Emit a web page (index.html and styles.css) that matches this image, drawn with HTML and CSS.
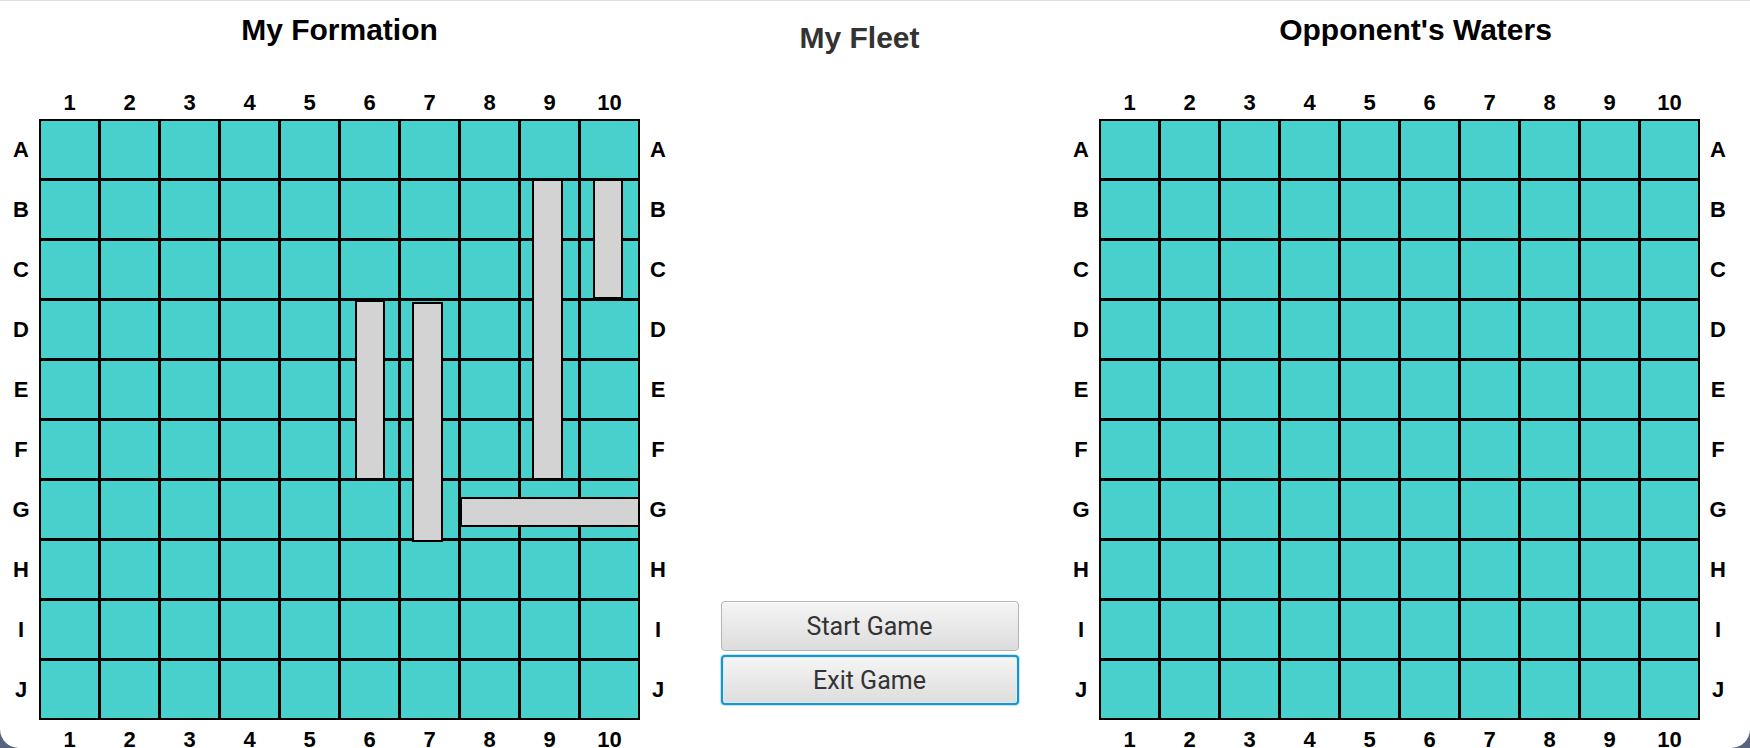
FILE: index.html
```html
<!DOCTYPE html>
<html lang="en">
<head>
  <meta charset="UTF-8">
  <title>Battleship</title>
  <link rel="stylesheet" href="styles.css">
</head>
<body>

  <div class="window">
    <section class="board" id="myBoard">
      <h2 class="board-title">My Formation</h2>
      <div class="col-nums top"></div>
      <div class="row-labels left"></div>
      <div class="grid"></div>
      <div class="row-labels right"></div>
      <div class="col-nums bottom"></div>
    </section>

    <div class="fleet">
      <h2 class="fleet-title">My Fleet</h2>
      <div class="actions">
        <button type="button" class="btn">Start Game</button>
        <button type="button" class="btn focused">Exit Game</button>
      </div>
    </div>

    <section class="board" id="enemyBoard">
      <h2 class="board-title shifted">Opponent's Waters</h2>
      <div class="col-nums top"></div>
      <div class="row-labels left"></div>
      <div class="grid"></div>
      <div class="row-labels right"></div>
      <div class="col-nums bottom"></div>
    </section>
  </div>

  <script>
    const rows = "ABCDEFGHIJ";

    // ships placed on my board (pixels inside the grid)
    const ships = [
      { left: 493, top: 60, width: 31, height: 301 },
      { left: 554, top: 60, width: 30, height: 120 },
      { left: 316, top: 181, width: 30, height: 180 },
      { left: 373, top: 183, width: 31, height: 240 },
      { left: 421, top: 378, width: 180, height: 30 }
    ];

    function buildBoard(board) {
      board.querySelectorAll(".col-nums").forEach(function (el) {
        for (let i = 1; i <= 10; i++) {
          const span = document.createElement("span");
          span.textContent = i;
          el.appendChild(span);
        }
      });
      board.querySelectorAll(".row-labels").forEach(function (el) {
        for (const r of rows) {
          const span = document.createElement("span");
          span.textContent = r;
          el.appendChild(span);
        }
      });
      const grid = board.querySelector(".grid");
      for (let i = 0; i < 100; i++) {
        const cell = document.createElement("div");
        cell.className = "cell";
        grid.appendChild(cell);
      }
      return grid;
    }

    const myGrid = buildBoard(document.getElementById("myBoard"));
    buildBoard(document.getElementById("enemyBoard"));

    ships.forEach(function (s) {
      const ship = document.createElement("div");
      ship.className = "ship";
      ship.style.left = s.left + "px";
      ship.style.top = s.top + "px";
      ship.style.width = s.width + "px";
      ship.style.height = s.height + "px";
      myGrid.appendChild(ship);
    });
  </script>

</body>
</html>
```

FILE: styles.css
```css
body {
  margin: 0;
  background-color: #58637d;
  font-family: "Liberation Sans", Arial, sans-serif;
  overflow: hidden;
}

.window {
  display: flex;
  height: 748px;
  padding: 0 14px 0 3px;
  box-sizing: border-box;
  background-color: #fff;
  border-top: 1px solid #dedede;
  border-radius: 0 0 19px 19px;
}

.board {
  display: grid;
  grid-template-columns: 36px 601px 36px;
  grid-template-rows: 90px 28px 601px auto;
}

.board-title {
  grid-column: 2;
  grid-row: 1;
  margin: 0;
  padding-top: 12px;
  font-size: 30px;
  line-height: 34px;
  font-weight: bold;
  color: #000;
  text-align: center;
}

.board-title.shifted {
  padding-left: 32px;
}

.col-nums {
  grid-column: 2;
  display: grid;
  grid-template-columns: repeat(10, 57px);
  column-gap: 3px;
  padding: 0 2px;
  font-size: 22px;
  font-weight: bold;
  line-height: 24px;
  text-align: center;
}

.col-nums.top {
  grid-row: 2;
}

.col-nums.bottom {
  grid-row: 4;
  margin-top: 8px;
}

.row-labels {
  grid-row: 3;
  display: grid;
  grid-template-rows: repeat(10, 57px);
  row-gap: 3px;
  padding: 2px 0;
  align-items: center;
  text-align: center;
  font-size: 22px;
  font-weight: bold;
}

.row-labels.left {
  grid-column: 1;
}

.row-labels.right {
  grid-column: 3;
}

.grid {
  grid-column: 2;
  grid-row: 3;
  position: relative;
  display: grid;
  grid-template-columns: repeat(10, 57px);
  grid-template-rows: repeat(10, 57px);
  gap: 3px;
  padding: 2px;
  background-color: #000;
}

.cell {
  background-color: #48d1cc;
}

.ship {
  position: absolute;
  box-sizing: border-box;
  background-color: #d3d3d3;
  border: 2px solid #000;
}

.fleet {
  flex: 1;
  display: flex;
  flex-direction: column;
  align-items: center;
}

.fleet-title {
  margin: 0 20px 0 0;
  padding-top: 20px;
  font-size: 30px;
  line-height: 34px;
  font-weight: bold;
  color: #333;
}

.actions {
  margin-top: auto;
  margin-bottom: 43px;
  display: flex;
  flex-direction: column;
  gap: 4px;
}

.btn {
  width: 298px;
  height: 50px;
  box-sizing: border-box;
  border: 1px solid #b4b4b4;
  border-radius: 4px;
  background: linear-gradient(#f5f5f5, #dddddd);
  box-shadow: inset 0 1px 0 #fff;
  font-family: Roboto, sans-serif;
  font-size: 25px;
  color: #333;
  cursor: pointer;
}

.btn.focused {
  border: 2px solid #0f98d4;
  box-shadow: 0 0 0 1px #c4e6f6, inset 0 0 0 1px #e8e8e8;
}
```
